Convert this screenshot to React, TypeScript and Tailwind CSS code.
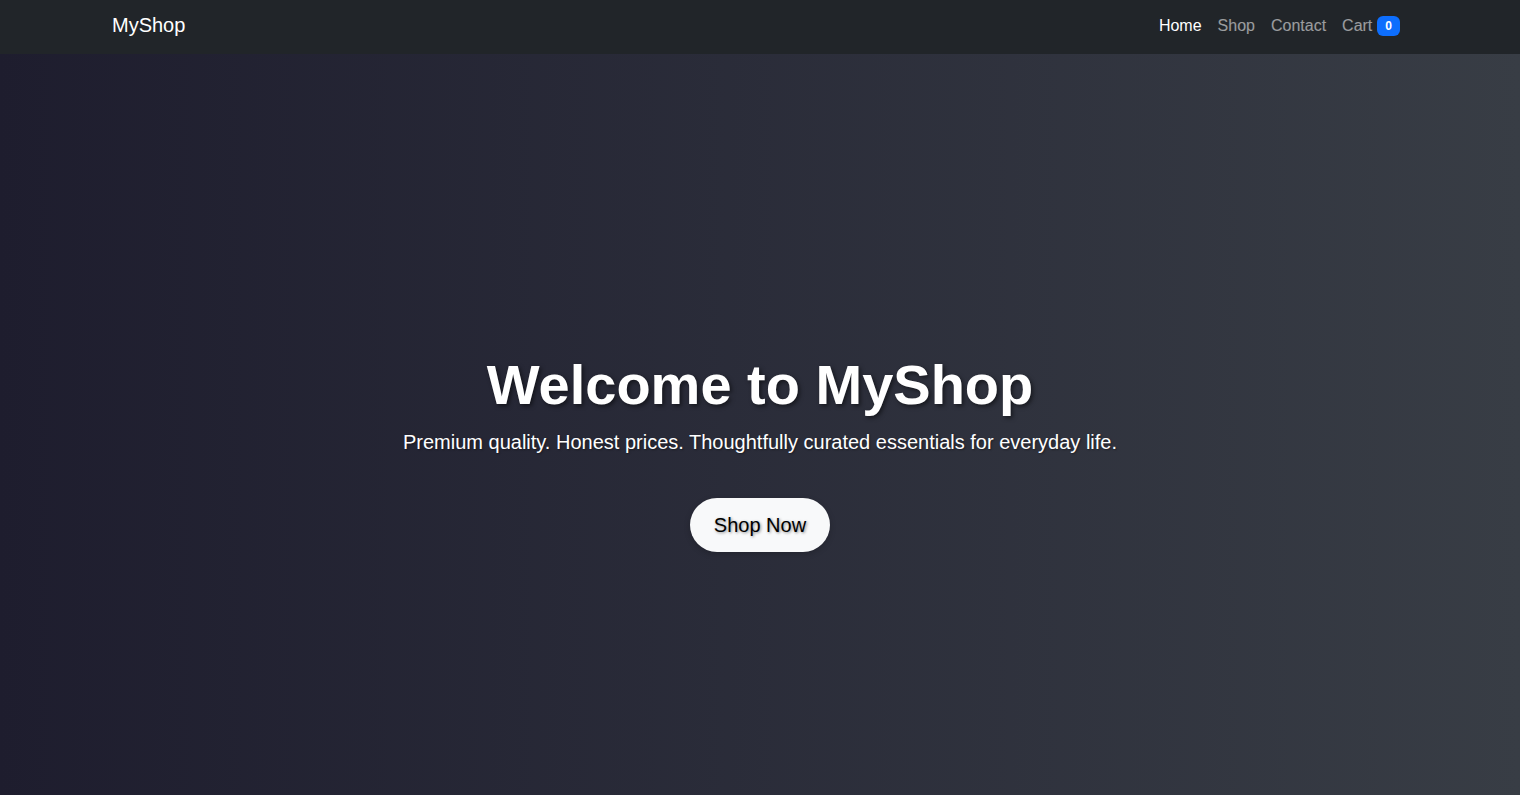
const links = [
  { label: 'Home', active: true },
  { label: 'Shop', active: false },
  { label: 'Contact', active: false },
];

const Navbar = () => {
  return (
    <nav className="bg-[#212529] h-[54px] flex items-center">
      <div className="w-[1320px] mx-auto px-3 pb-[2px] flex items-center justify-between">
        <a href="#" className="text-white text-[20px] leading-[30px] -mt-[2px]">
          MyShop
        </a>
        <ul className="flex items-center">
          {links.map((link) => (
            <li key={link.label}>
              <a
                href="#"
                className={
                  link.active
                    ? 'block px-2 py-2 text-white text-base'
                    : 'block px-2 py-2 text-white/55 text-base'
                }
              >
                {link.label}
              </a>
            </li>
          ))}
          <li>
            <a href="#" className="flex items-center px-2 py-2 text-white/55 text-base">
              Cart
              <span className="ml-[5px] bg-[#0d6efd] text-white text-[12px] font-bold leading-none px-[8px] py-[4px] rounded-[6px]">
                0
              </span>
            </a>
          </li>
        </ul>
      </div>
    </nav>
  );
};

export default function App() {
  return (
    <div className="font-['Liberation_Sans',Arial,sans-serif] bg-[#212529] h-[795px] overflow-hidden flex flex-col">
      <Navbar />
      {/* hero is a full viewport tall in the original, so content sits 27px below the visible centre */}
      <section className="flex-1 pt-[54px] bg-gradient-to-r from-[#1e1d2e] to-[#383d45] flex items-center justify-center text-center text-white">
        <div className="flex flex-col items-center">
          <h1 className="text-[56px] leading-[1.2] font-bold mb-2 [text-shadow:2px_2px_4px_rgba(0,0,0,0.5)]">
            Welcome to MyShop
          </h1>
          <p className="text-[20px] leading-[30px] [text-shadow:1px_1px_2px_rgba(0,0,0,0.4)]">
            Premium quality. Honest prices. Thoughtfully curated essentials for everyday life.
          </p>
          <a
            href="#"
            className="mt-[41px] bg-[#f8f9fa] text-black text-[20px] leading-[30px] px-6 py-[12px] rounded-full shadow-[0_2px_6px_rgba(0,0,0,0.2)] [text-shadow:1px_1px_3px_rgba(0,0,0,0.45)]"
          >
            Shop Now
          </a>
        </div>
      </section>
    </div>
  );
}
